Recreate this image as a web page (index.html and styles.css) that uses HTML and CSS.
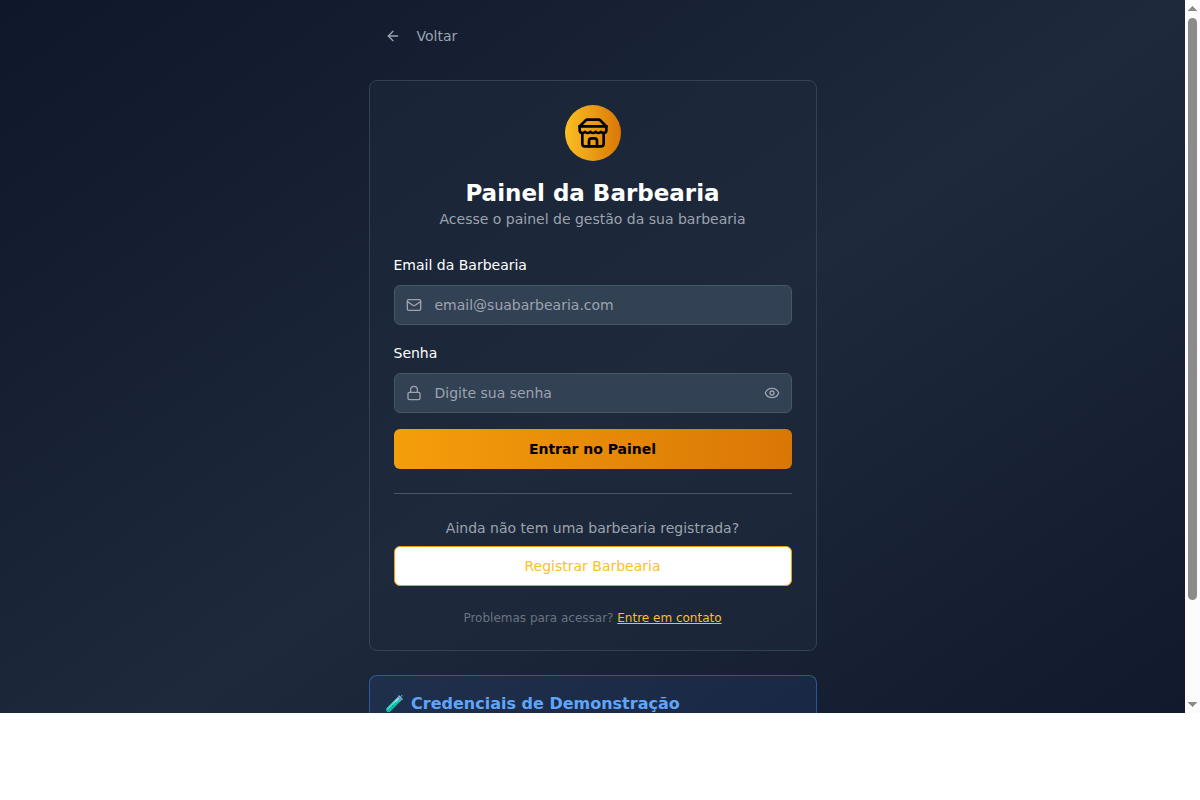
FILE: index.html
```html
<!DOCTYPE html>
<html lang="pt-BR">
<head>
<meta charset="utf-8">
<meta name="viewport" content="width=device-width, initial-scale=1">
<title>Painel da Barbearia</title>
<link rel="stylesheet" href="styles.css">
</head>
<body>
<div class="viewport">
  <div class="scroller">
    <main class="page">
      <div class="column">
        <button class="back" type="button">
          <svg class="icon" viewBox="0 0 24 24"><path d="m12 19-7-7 7-7"/><path d="M19 12H5"/></svg>
          Voltar
        </button>

        <section class="card">
          <header class="card-header">
            <div class="logo">
              <svg class="icon logo-icon" viewBox="0 0 24 24"><path d="m2 7 4.41-4.41A2 2 0 0 1 7.83 2h8.34a2 2 0 0 1 1.42.59L22 7"/><path d="M4 12v8a2 2 0 0 0 2 2h12a2 2 0 0 0 2-2v-8"/><path d="M15 22v-4a2 2 0 0 0-2-2h-2a2 2 0 0 0-2 2v4"/><path d="M2 7h20"/><path d="M22 7v3a2 2 0 0 1-2 2a2.7 2.7 0 0 1-1.59-.63.7.7 0 0 0-.82 0A2.7 2.7 0 0 1 16 12a2.7 2.7 0 0 1-1.59-.63.7.7 0 0 0-.82 0A2.7 2.7 0 0 1 12 12a2.7 2.7 0 0 1-1.59-.63.7.7 0 0 0-.82 0A2.7 2.7 0 0 1 8 12a2.7 2.7 0 0 1-1.59-.63.7.7 0 0 0-.82 0A2.7 2.7 0 0 1 4 12a2 2 0 0 1-2-2V7"/></svg>
            </div>
            <h1 class="title">Painel da Barbearia</h1>
            <p class="muted">Acesse o painel de gestão da sua barbearia</p>
          </header>

          <form class="form">
            <div class="field">
              <label class="label" for="email">Email da Barbearia</label>
              <div class="control">
                <svg class="icon" viewBox="0 0 24 24"><rect width="20" height="16" x="2" y="4" rx="2"/><path d="m22 7-8.97 5.7a1.94 1.94 0 0 1-2.06 0L2 7"/></svg>
                <input class="input" id="email" type="email" placeholder="email@suabarbearia.com">
              </div>
            </div>
            <div class="field">
              <label class="label" for="password">Senha</label>
              <div class="control">
                <svg class="icon" viewBox="0 0 24 24"><rect width="18" height="11" x="3" y="11" rx="2" ry="2"/><path d="M7 11V7a5 5 0 0 1 10 0v4"/></svg>
                <input class="input" id="password" type="password" placeholder="Digite sua senha">
                <button class="reveal" type="button" aria-label="Mostrar senha">
                  <svg class="icon" viewBox="0 0 24 24"><path d="M2.062 12.348a1 1 0 0 1 0-.696 10.75 10.75 0 0 1 19.876 0 1 1 0 0 1 0 .696 10.75 10.75 0 0 1-19.876 0"/><circle cx="12" cy="12" r="3"/></svg>
                </button>
              </div>
            </div>
            <button class="button primary" type="submit">Entrar no Painel</button>
          </form>

          <div class="register">
            <p class="muted">Ainda não tem uma barbearia registrada?</p>
            <button class="button outline" type="button">Registrar Barbearia</button>
          </div>
          <p class="help">Problemas para acessar? <a class="link" href="#contato">Entre em contato</a></p>
        </section>

        <section class="demo">
          <h2 class="demo-title">🧪 Credenciais de Demonstração</h2>
        </section>
      </div>
    </main>
  </div>
  <div class="scrollbar" aria-hidden="true">
    <svg class="arrow" viewBox="0 0 9 5"><path d="M4 0h1v1h1v1h1v1h1v1h1v1H0V4h1V3h1V2h1V1h1z"/></svg>
    <div class="track"><div class="thumb"></div></div>
    <svg class="arrow" viewBox="0 0 9 5"><path d="M0 0h9v1H8v1H7v1H6v1H5v1H4V4H3V3H2V2H1V1H0z"/></svg>
  </div>
</div>
</body>
</html>
```

FILE: styles.css
```css
*,
*::before,
*::after {
  box-sizing: border-box;
}

body {
  margin: 0;
  background: #fff;
  color: #fff;
  font-family: "DejaVu Sans", "Noto Color Emoji", sans-serif;
  font-size: 14px;
  line-height: 20px;
}

h1,
h2,
p {
  margin: 0;
}

button,
input {
  font: inherit;
}

button {
  cursor: pointer;
}

.viewport {
  display: flex;
  height: calc(100vh - 87px);
}

.scroller {
  flex: 1;
  min-width: 0;
  overflow-y: auto;
  scrollbar-width: none;
}

.scrollbar {
  display: flex;
  flex-direction: column;
  align-items: center;
  gap: 7px;
  width: 15px;
  padding: 6px 0;
  background: #fcfcfc;
}

.arrow {
  flex: none;
  width: 9px;
  height: 5px;
  fill: #8b8b8b;
}

.track {
  flex: 1;
  width: 9px;
}

.thumb {
  height: 86%;
  border-radius: 5px;
  background: #8b8b8b;
}

.page {
  display: flex;
  justify-content: center;
  min-height: 100%;
  padding: 16px;
  background: linear-gradient(to bottom right, #0f172a, #1e293b, #0f172a);
}

.column {
  display: flex;
  flex-direction: column;
  gap: 24px;
  width: 100%;
  max-width: 448px;
}

.icon {
  flex: none;
  width: 16px;
  height: 16px;
  fill: none;
  stroke: currentColor;
  stroke-width: 2;
  stroke-linecap: round;
  stroke-linejoin: round;
}

.back {
  display: flex;
  align-items: center;
  align-self: flex-start;
  gap: 16px;
  height: 40px;
  padding: 0 16px;
  border: 0;
  background: none;
  color: #9ca3af;
}

.card {
  padding: 24px;
  border: 1px solid #334155;
  border-radius: 8px;
  background: rgb(30 41 59 / 50%);
  text-align: center;
}

.card-header {
  display: flex;
  flex-direction: column;
  align-items: center;
  padding-bottom: 24px;
}

.logo {
  display: grid;
  place-items: center;
  width: 56px;
  height: 56px;
  margin-bottom: 16px;
  border-radius: 50%;
  background: linear-gradient(to right, #fbbf24, #d97706);
  color: #000;
}

.logo-icon {
  width: 32px;
  height: 32px;
}

.title {
  font-size: 23px;
  font-weight: 700;
  line-height: 32px;
}

.muted {
  color: #9ca3af;
}

.form {
  display: flex;
  flex-direction: column;
  gap: 16px;
}

.field {
  display: flex;
  flex-direction: column;
  gap: 8px;
  text-align: left;
}

.label {
  line-height: 24px;
}

.control {
  display: flex;
  align-items: center;
  gap: 13px;
  height: 40px;
  padding: 0 11px;
  border: 1px solid #475569;
  border-radius: 6px;
  background: #334155;
  color: #9ca3af;
}

.control:focus-within {
  border-color: #f59e0b;
}

.input {
  flex: 1;
  min-width: 0;
  padding: 0;
  border: 0;
  outline: 0;
  background: none;
  color: #fff;
}

.input::placeholder {
  color: #9ca3af;
}

.reveal {
  display: flex;
  padding: 0;
  border: 0;
  background: none;
  color: inherit;
}

.button {
  width: 100%;
  height: 40px;
  padding: 0 16px;
  border: 0;
  border-radius: 6px;
}

.primary {
  background: linear-gradient(to right, #f59e0b, #d97706);
  color: #000;
  font-weight: 700;
}

.outline {
  border: 1px solid #f59e0b;
  background: #fff;
  color: #fbbf24;
}

.register {
  display: flex;
  flex-direction: column;
  gap: 8px;
  margin-top: 24px;
  padding-top: 24px;
  border-top: 1px solid #475569;
}

.help {
  margin-top: 24px;
  color: #6b7280;
  font-size: 12px;
  line-height: 16px;
}

.link {
  color: #fbbf24;
  text-decoration: underline;
}

.demo {
  min-height: 137px;
  padding: 16px;
  border: 1px solid rgb(59 130 246 / 50%);
  border-radius: 8px;
  background: rgb(59 130 246 / 10%);
}

.demo-title {
  color: #60a5fa;
  font-size: 16px;
  font-weight: 700;
  line-height: 24px;
}
```
